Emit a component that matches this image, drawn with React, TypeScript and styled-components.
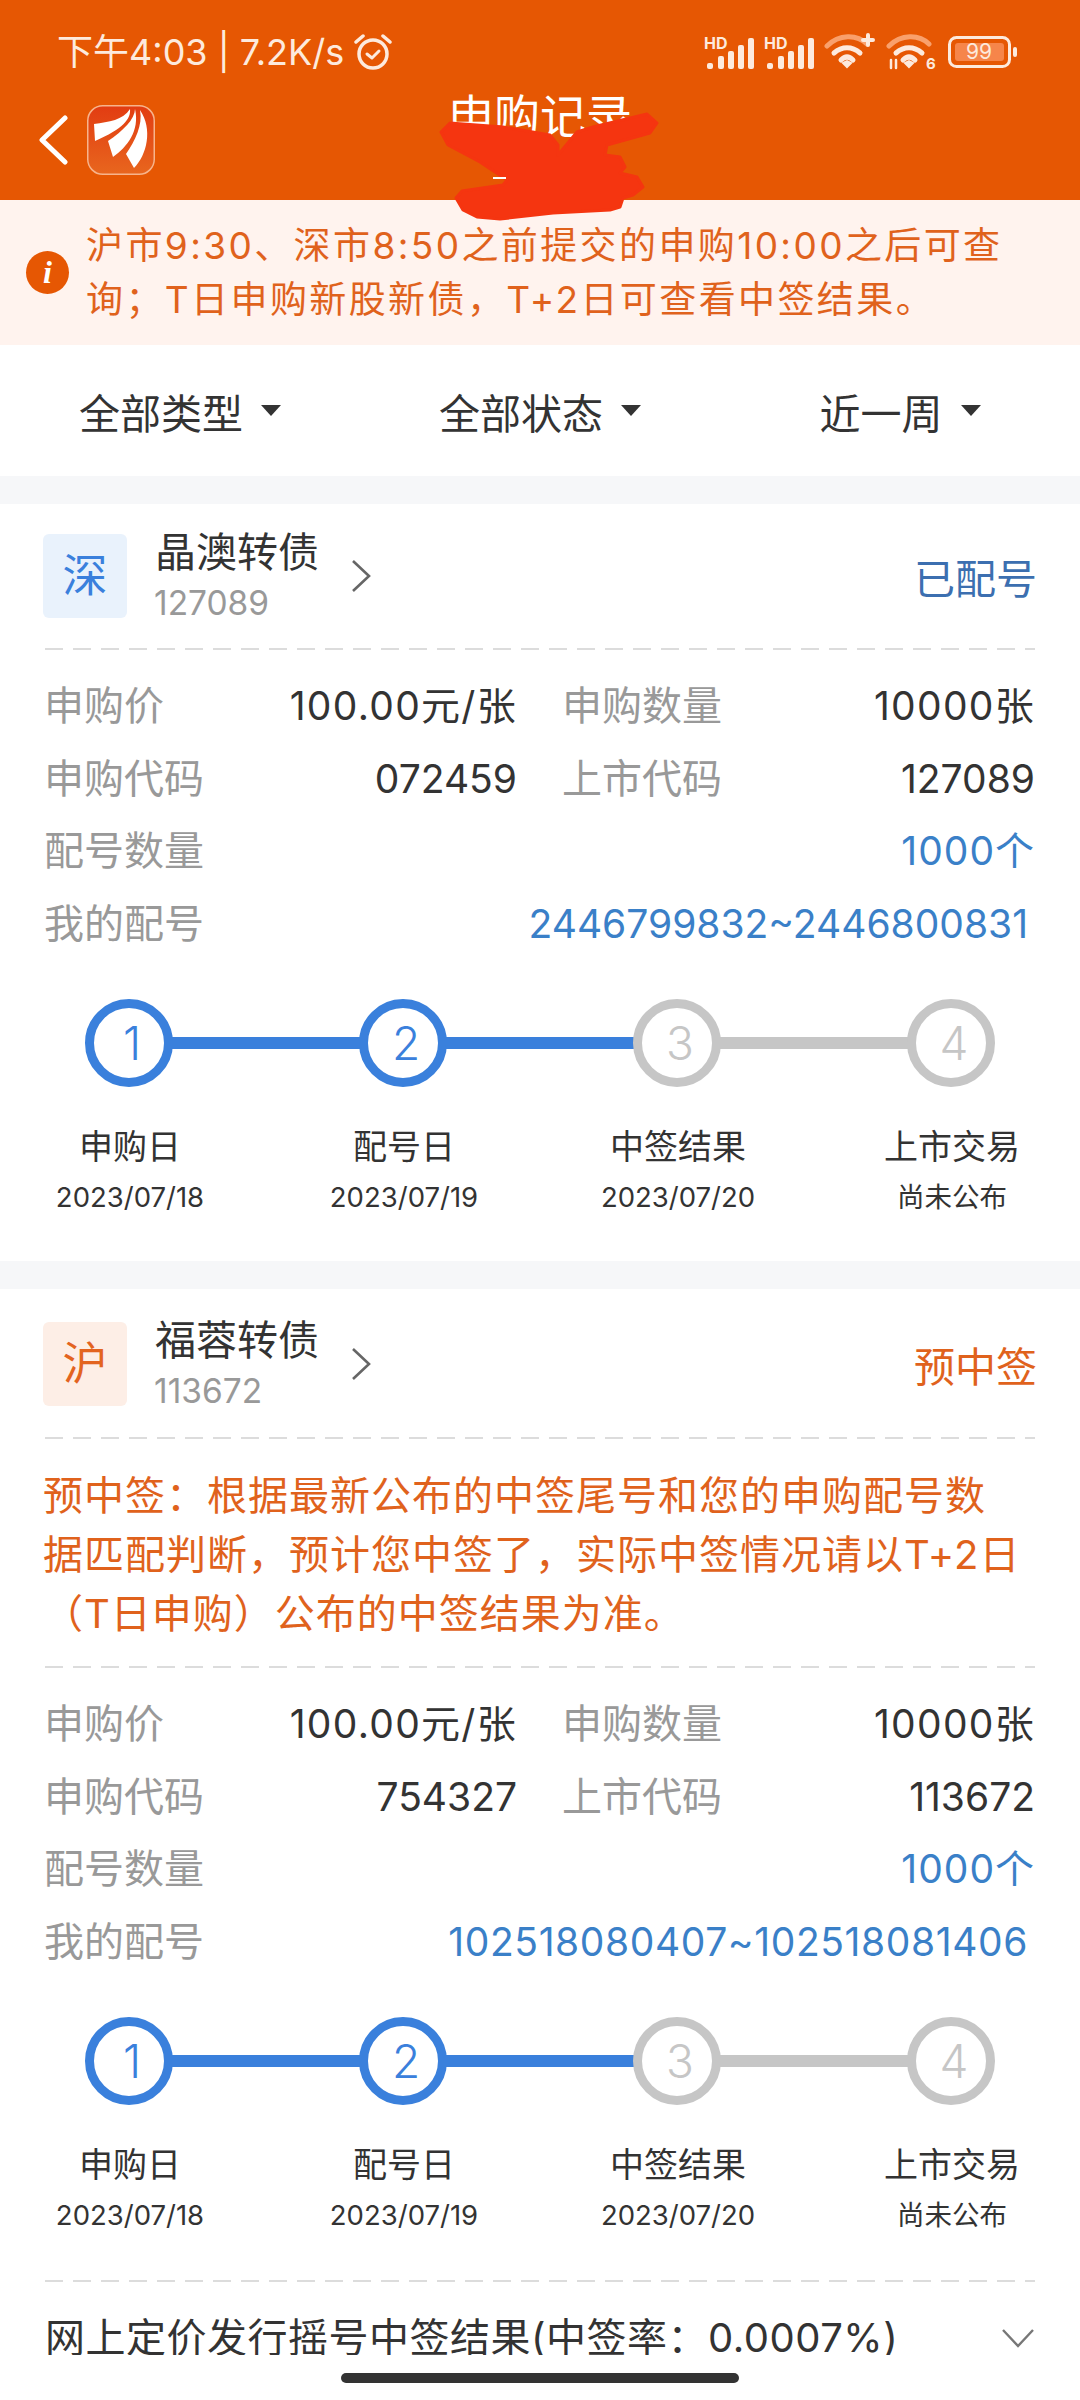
import React from "react";
import styled, { createGlobalStyle } from "styled-components";

const GlobalStyle = createGlobalStyle`
  html, body {
    margin: 0;
    padding: 0;
    background: #fff;
  }
  body {
    font-family: "Inter", "Noto Sans CJK SC", sans-serif;
  }
`;

const Page = styled.div`
  position: relative;
  width: 1080px;
  height: 2400px;
  overflow: hidden;
  background: #fff;
`;

const Header = styled.header`
  height: 200px;
  background: #e65703;
  display: flex;
  flex-direction: column;
  box-sizing: border-box;
  padding-top: 30px;
`;

const StatusBar = styled.div`
  display: flex;
  align-items: center;
  justify-content: space-between;
  height: 44px;
  padding: 0 62px 0 57px;
  color: #fdeadd;
`;

const StatusLeft = styled.div`
  display: flex;
  align-items: center;
  gap: 10px;
  font-size: 36px;
  line-height: 44px;
`;

const StatusRight = styled.div`
  display: flex;
  align-items: center;
  gap: 10px;
`;

const NavBar = styled.div`
  display: grid;
  grid-template-columns: 1fr auto 1fr;
  align-items: center;
  padding-top: 22px;
  height: 88px;
`;

const NavLeft = styled.div`
  display: flex;
  align-items: center;
  gap: 19px;
  padding-left: 38px;
`;

const Title = styled.div`
  align-self: start;
  margin-top: -10px;
  font-size: 46px;
  color: #fff;
  line-height: 60px;
`;

const Notice = styled.div`
  display: flex;
  align-items: center;
  height: 145px;
  box-sizing: border-box;
  background: #fff3ee;
  padding-left: 26px;
  gap: 17px;
`;

const NoticeIcon = styled.div`
  flex: none;
  width: 43px;
  height: 43px;
  border-radius: 50%;
  background: #e65703;
  color: #fff;
  font: italic 700 32px/43px "Liberation Serif", serif;
  text-align: center;
`;

const NoticeText = styled.div`
  font-size: 37px;
  line-height: 54px;
  letter-spacing: 2.4px;
  color: #e0621c;
  width: 940px;
`;

const Filters = styled.div`
  display: grid;
  grid-template-columns: repeat(3, 1fr);
  height: 131px;
  align-items: center;
`;

const FilterItem = styled.div`
  display: flex;
  align-items: center;
  justify-content: center;
  gap: 18px;
  font-size: 41px;
  color: #333;
`;

const Caret = styled.span`
  width: 0;
  height: 0;
  border-left: 10px solid transparent;
  border-right: 10px solid transparent;
  border-top: 11px solid #333;
`;

const GapBar = styled.div`
  height: 28px;
  background: #f6f7f9;
`;

const Card = styled.section<{ $top: number; $height?: number }>`
  padding: ${(p) => p.$top}px 45px 0;
  background: #fff;
  box-sizing: border-box;
  ${(p) => (p.$height ? `height: ${p.$height}px;` : "")}
`;

const CardHead = styled.div`
  display: flex;
  align-items: center;
  height: 84px;
  margin-left: -2px;
`;

const Badge = styled.div<{ $market: "sz" | "sh" }>`
  flex: none;
  width: 84px;
  height: 84px;
  border-radius: 6px;
  background: ${(p) => (p.$market === "sz" ? "#e9f2fc" : "#fdeee6")};
  color: ${(p) => (p.$market === "sz" ? "#3a80dc" : "#e3641f")};
  font-size: 45px;
  line-height: 84px;
  text-align: center;
`;

const NameBlock = styled.div`
  margin-left: 28px;
  display: flex;
  flex-direction: column;
  width: 196px;
`;

const Name = styled.div`
  font-size: 41px;
  line-height: 50px;
  color: #333;
  margin-top: -1px;
`;

const Code = styled.div`
  font-size: 33.5px;
  line-height: 42px;
  color: #999;
  margin-top: 5px;
  margin-left: -1px;
`;

const HeadStatus = styled.div<{ $tone: "blue" | "orange" }>`
  margin-left: auto;
  margin-right: -2px;
  font-size: 41px;
  color: ${(p) => (p.$tone === "blue" ? "#3c6fb0" : "#e0621c")};
`;

const Dashed = styled.div<{ $top: number; $bottom: number }>`
  height: 2px;
  margin: ${(p) => p.$top}px 0 ${(p) => p.$bottom}px;
  background: repeating-linear-gradient(90deg, #dcdcdc 0 18px, transparent 18px 28px);
`;

const Hint = styled.div`
  font-size: 40px;
  line-height: 59px;
  letter-spacing: 1px;
  color: #e0621c;
  margin-left: -2px;
  width: 980px;
`;

const Rows = styled.div`
  display: flex;
  flex-direction: column;
`;

const Row = styled.div`
  display: flex;
  height: 72.5px;
  align-items: baseline;
  line-height: 72.5px;
  font-size: 39px;
  color: #333;
`;

const Pair = styled.div`
  display: flex;
  align-items: baseline;
  justify-content: space-between;
  width: 472px;
  & + & {
    margin-left: 46px;
  }
`;

const Label = styled.span`
  color: #999;
  font-size: 40px;
  margin-left: -1px;
`;

const UnitValue = styled.span`
  letter-spacing: 1.3px;
`;

const WideValue = styled.span<{ $inset?: boolean; $spread?: number }>`
  margin-left: auto;
  margin-right: ${(p) => (p.$inset ? 7 : 0)}px;
  letter-spacing: ${(p) => p.$spread ?? 0}px;
  color: #3a80c8;
`;

const Track = styled.div`
  display: flex;
  align-items: center;
  margin-top: 39px;
  padding: 0 40px;
`;

const Dot = styled.div<{ $done: boolean }>`
  flex: none;
  box-sizing: border-box;
  width: 88px;
  height: 88px;
  border-radius: 50%;
  border: 9px solid ${(p) => (p.$done ? "#3a80dc" : "#c6c6c6")};
  color: ${(p) => (p.$done ? "#3a80dc" : "#c6c6c6")};
  font-size: 46px;
  font-weight: 300;
  line-height: 70px;
  text-align: center;
  text-indent: 6px;
`;

const Connector = styled.div<{ $done: boolean }>`
  flex: 1;
  height: 12px;
  margin: 0 -1px;
  background: ${(p) => (p.$done ? "#3a80dc" : "#c6c6c6")};
`;

const StepLabels = styled.div`
  display: flex;
  justify-content: space-between;
  margin: 35px -2px 0 0;
`;

const StepLabel = styled.div`
  width: 170px;
  text-align: center;
  color: #333;
`;

const StepName = styled.div`
  font-size: 34px;
  line-height: 50px;
  white-space: nowrap;
`;

const StepDate = styled.div`
  font-size: 27.5px;
  line-height: 50px;
  white-space: nowrap;
`;

const ResultRow = styled.div`
  display: flex;
  align-items: center;
  justify-content: space-between;
  font-size: 40px;
  line-height: 56px;
  color: #333;
  letter-spacing: 0.5px;
`;

const HomeBar = styled.div`
  position: absolute;
  left: 0;
  right: 0;
  bottom: 0;
  height: 45px;
  background: #fff;
  display: flex;
  justify-content: center;
  padding-top: 18px;
  box-sizing: border-box;
`;

const HomeHandle = styled.div`
  width: 398px;
  height: 10px;
  border-radius: 5px;
  background: #333;
`;

const Scribble = styled.svg`
  position: absolute;
  left: 0;
  top: 0;
  pointer-events: none;
`;

const BackIcon = () => (
  <svg width="30" height="50" viewBox="0 0 30 50" fill="none">
    <path d="M27 3L4 25L27 47" stroke="#fff" strokeWidth="5" strokeLinecap="round" strokeLinejoin="round" />
  </svg>
);

const AppLogo = () => (
  <svg width="68" height="70" viewBox="0 0 68 70">
    <defs>
      <linearGradient id="logoBg" x1="0" y1="0" x2="0" y2="1">
        <stop offset="0" stopColor="#e23c12" />
        <stop offset="1" stopColor="#e8661e" />
      </linearGradient>
    </defs>
    <rect x="0.75" y="0.75" width="66.5" height="68.5" rx="15" fill="url(#logoBg)" stroke="#f7b48c" strokeWidth="1.5" />
    <path d="M7 19C22 17 36 15 43 4C44 14 36 24 8 36Z" fill="#fff" />
    <path d="M48 4C48 14 36 26 21 36L26 52C40 42 53 26 48 4Z" fill="#fff" />
    <path d="M53 5C56 20 48 36 39 49L47 63C60 50 66 24 53 5Z" fill="#fff" />
  </svg>
);

const AlarmIcon = () => (
  <svg width="38" height="38" viewBox="0 0 38 38" fill="none" stroke="#fdeadd" strokeLinecap="round" strokeLinejoin="round">
    <circle cx="19" cy="21" r="14" strokeWidth="3.5" />
    <path d="M13 21L18 25L25 18" strokeWidth="3" />
    <path d="M2 9L9 3M36 9L29 3" strokeWidth="3.5" />
  </svg>
);

const SignalIcon = () => (
  <svg width="50" height="40" viewBox="0 -4 50 40" fill="#fdeadd">
    <text x="0" y="13" fontSize="16" fontWeight="700" fontFamily="Inter, sans-serif">HD</text>
    <rect x="3" y="27" width="6" height="6" rx="2" />
    <rect x="14" y="20" width="6" height="13" rx="2" />
    <rect x="24" y="15" width="6" height="18" rx="2" />
    <rect x="34" y="9" width="6" height="24" rx="2" />
    <rect x="44" y="2" width="6" height="31" rx="2" />
  </svg>
);

const WifiIcon = ({ badge }: { badge: "plus" | "six" }) => (
  <svg width="52" height="46" viewBox="0 -4 52 46" fill="none" strokeLinecap="round">
    <path d="M3 13C15 1 33 1 43 11" stroke="#f9a06c" strokeWidth="5" />
    <path d="M10 20C18 13 28 13 36 20" stroke="#fdeadd" strokeWidth="5" />
    <path d="M17 27C21 23 25 23 29 27" stroke="#fdeadd" strokeWidth="5" />
    <path d="M19 30L23 34L27 30L23 28Z" fill="#fdeadd" stroke="#fdeadd" strokeWidth="2" />
    {badge === "plus" ? (
      <path d="M44 2V12M39 7H49" stroke="#fdeadd" strokeWidth="4" />
    ) : (
      <>
        <text x="40" y="36" fontSize="15" fontWeight="700" fill="#fdeadd" fontFamily="Inter, sans-serif">6</text>
        <path d="M5 27V35M10 35V27" stroke="#fdeadd" strokeWidth="2.5" />
      </>
    )}
  </svg>
);

const BatteryIcon = () => (
  <svg width="70" height="32" viewBox="0 0 70 32" fill="none">
    <rect x="1.5" y="1.5" width="60" height="29" rx="7" stroke="#fdeadd" strokeWidth="3" />
    <rect x="7" y="7" width="49" height="18" rx="3" fill="#f6854a" />
    <rect x="65" y="11" width="4" height="10" rx="2" fill="#fdeadd" />
    <text x="31" y="23" fontSize="21" fill="#fdeadd" textAnchor="middle" fontFamily="Inter, sans-serif">99</text>
  </svg>
);

const ChevronRight = () => (
  <svg width="20" height="34" viewBox="0 0 20 34" fill="none">
    <path d="M2 2L18 17L2 32" stroke="#666" strokeWidth="2.6" />
  </svg>
);

const ChevronDown = () => (
  <svg width="34" height="20" viewBox="0 0 34 20" fill="none">
    <path d="M2 2L17 18L32 2" stroke="#777" strokeWidth="2.4" />
  </svg>
);

const steps = [
  { name: "申购日", done: true },
  { name: "配号日", done: true },
  { name: "中签结果", done: false },
  { name: "上市交易", done: false },
];

const Progress = ({ dates }: { dates: string[] }) => (
  <>
    <Track>
      {steps.map((s, i) => (
        <React.Fragment key={s.name}>
          <Dot $done={s.done}>{i + 1}</Dot>
          {i < steps.length - 1 && <Connector $done={s.done} />}
        </React.Fragment>
      ))}
    </Track>
    <StepLabels>
      {steps.map((s, i) => (
        <StepLabel key={s.name}>
          <StepName>{s.name}</StepName>
          <StepDate>{dates[i]}</StepDate>
        </StepLabel>
      ))}
    </StepLabels>
  </>
);

type BondProps = {
  market: "sz" | "sh";
  marketName: string;
  name: string;
  code: string;
  status: string;
  tone: "blue" | "orange";
  buyCode: string;
  allotNo: string;
  allotSpread?: number;
  hint?: string;
};

const Bond = (b: BondProps) => (
  <>
    <CardHead>
      <Badge $market={b.market}>{b.marketName}</Badge>
      <NameBlock>
        <Name>{b.name}</Name>
        <Code>{b.code}</Code>
      </NameBlock>
      <ChevronRight />
      <HeadStatus $tone={b.tone}>{b.status}</HeadStatus>
    </CardHead>
    <Dashed $top={b.hint ? 31 : 30} $bottom={b.hint ? 27 : 20} />
    {b.hint && (
      <>
        <Hint>{b.hint}</Hint>
        <Dashed $top={23} $bottom={20} />
      </>
    )}
    <Rows>
      <Row>
        <Pair>
          <Label>申购价</Label>
          <UnitValue>100.00元/张</UnitValue>
        </Pair>
        <Pair>
          <Label>申购数量</Label>
          <UnitValue>10000张</UnitValue>
        </Pair>
      </Row>
      <Row>
        <Pair>
          <Label>申购代码</Label>
          <span>{b.buyCode}</span>
        </Pair>
        <Pair>
          <Label>上市代码</Label>
          <span>{b.code}</span>
        </Pair>
      </Row>
      <Row>
        <Label>配号数量</Label>
        <WideValue $spread={1}>1000个</WideValue>
      </Row>
      <Row>
        <Label>我的配号</Label>
        <WideValue $inset $spread={b.allotSpread}>{b.allotNo}</WideValue>
      </Row>
    </Rows>
    <Progress dates={["2023/07/18", "2023/07/19", "2023/07/20", "尚未公布"]} />
  </>
);

const App = () => (
  <Page>
    <GlobalStyle />
    <Header>
      <StatusBar>
        <StatusLeft>
          <span>下午4:03 | 7.2K/s</span>
          <AlarmIcon />
        </StatusLeft>
        <StatusRight>
          <SignalIcon />
          <SignalIcon />
          <WifiIcon badge="plus" />
          <WifiIcon badge="six" />
          <BatteryIcon />
        </StatusRight>
      </StatusBar>
      <NavBar>
        <NavLeft>
          <BackIcon />
          <AppLogo />
        </NavLeft>
        <Title>申购记录</Title>
        <div />
      </NavBar>
    </Header>
    <Notice>
      <NoticeIcon>i</NoticeIcon>
      <NoticeText>沪市9:30、深市8:50之前提交的申购10:00之后可查询；T日申购新股新债，T+2日可查看中签结果。</NoticeText>
    </Notice>
    <Filters>
      <FilterItem>全部类型<Caret /></FilterItem>
      <FilterItem>全部状态<Caret /></FilterItem>
      <FilterItem>近一周<Caret /></FilterItem>
    </Filters>
    <GapBar />
    <Card $top={30} $height={757}>
      <Bond
        market="sz"
        marketName="深"
        name="晶澳转债"
        code="127089"
        status="已配号"
        tone="blue"
        buyCode="072459"
        allotNo="2446799832~2446800831"
      />
    </Card>
    <GapBar />
    <Card $top={33}>
      <Bond
        market="sh"
        marketName="沪"
        name="福蓉转债"
        code="113672"
        status="预中签"
        tone="orange"
        buyCode="754327"
        allotNo="102518080407~102518081406"
        allotSpread={0.6}
        hint="预中签：根据最新公布的中签尾号和您的申购配号数据匹配判断，预计您中签了，实际中签情况请以T+2日（T日申购）公布的中签结果为准。"
      />
      <Dashed $top={40} $bottom={28} />
      <ResultRow>
        <span>网上定价发行摇号中签结果(中签率：0.0007%)</span>
        <ChevronDown />
      </ResultRow>
    </Card>
    <HomeBar>
      <HomeHandle />
    </HomeBar>
    <Scribble width="1080" height="240" viewBox="0 0 1080 240" fill="none">
      <path
        d="M441 132L450 123L503 127L550 135L558 145L558 155L577 132L593 127L647 114L657 123L650 133L607 145L605 155L620 157L625 167L620 173L637 177L643 187L633 195L623 198L620 207L610 210L553 213L500 219L477 217L463 210L456 198L462 191L503 185L507 180L480 162L448 145Z"
        fill="#f53510"
        stroke="#f53510"
        strokeWidth="3"
        strokeLinejoin="round"
      />
      <path d="M493 178H506" stroke="#fff" strokeWidth="2" />
    </Scribble>
  </Page>
);

export default App;
